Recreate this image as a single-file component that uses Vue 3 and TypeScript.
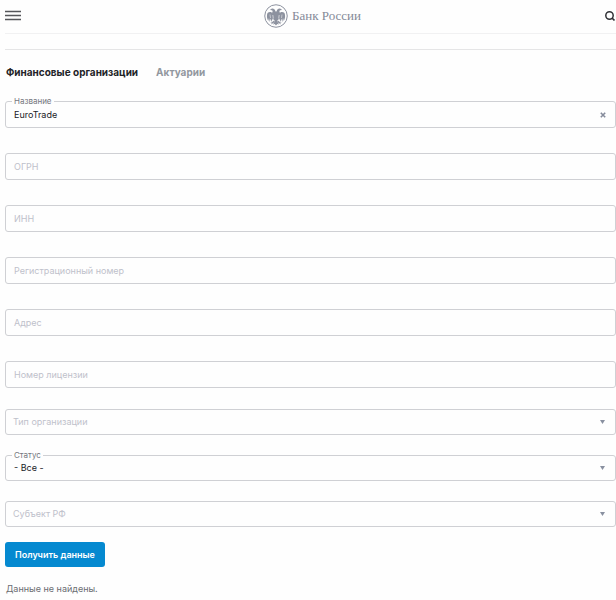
<script setup lang="ts">
import { ref } from 'vue'

interface Field {
  id: string
  label: string
  value: string
}

interface SelectField extends Field {
  options: string[]
}

const tabs = ['Финансовые организации', 'Актуарии']
const activeTab = ref(tabs[0])

const fields = ref<Field[]>([
  { id: 'name', label: 'Название', value: 'EuroTrade' },
  { id: 'ogrn', label: 'ОГРН', value: '' },
  { id: 'inn', label: 'ИНН', value: '' },
  { id: 'reg', label: 'Регистрационный номер', value: '' },
  { id: 'address', label: 'Адрес', value: '' },
  { id: 'license', label: 'Номер лицензии', value: '' },
])

const selects = ref<SelectField[]>([
  { id: 'type', label: 'Тип организации', value: '', options: [] },
  { id: 'status', label: 'Статус', value: '- Все -', options: ['- Все -'] },
  { id: 'region', label: 'Субъект РФ', value: '', options: [] },
])
</script>

<template>
  <div class="page">
    <header class="header">
      <button class="icon-button" type="button" aria-label="Меню">
        <svg width="16" height="12" viewBox="0 0 16 12">
          <path d="M0 1.5h16M0 5.5h16M0 9.5h16" stroke="#55565a" stroke-width="1.3" />
        </svg>
      </button>
      <a class="logo" href="#">
        <svg width="24" height="24" viewBox="0 0 48 48">
          <circle cx="24" cy="24" r="22.5" fill="none" stroke="#8d929f" stroke-width="2" />
          <g fill="#8d929f">
            <path d="M23 15c-1-4-3-6-6-6-2 0-3 1-5 3l3.500.5c1.500.5 2 1.500 1.500 3l-1 3 4 5h8l4-5-1-3c-.5-1.500 0-2.500 1.500-3l3.500-.5c-2-2-3-3-5-3-3 0-5 2-6 6z" />
            <path d="M18 19c-3-4-8-4-11-1-2 5-1.500 11 1.500 16l1.500-6 1.500 8 2-7 1.500 7 2.500-7 2.500 2z" />
            <path d="M30 19c3-4 8-4 11-1 2 5 1.500 11-1.500 16l-1.500-6-1.500 8-2-7-1.500 7-2.500-7-2.500 2z" />
            <path d="M18 20h12l-1 11-3 3 4 7-3.500-1-2.500 3-2.500-3-3.500 1 4-7-3-3z" />
            <path d="M20 33l-5 4h-3l3 1v3l2-2 5-3zM28 33l5 4h3l-3 1v3l-2-2-5-3z" />
          </g>
          <path d="M17.500 22l1 7M30.500 22l-1 7M12 21l1 7M36 21l-1 7" stroke="#fff" stroke-width="1" />
        </svg>
        <span>Банк России</span>
      </a>
      <button class="icon-button" type="button" aria-label="Поиск">
        <svg width="12" height="12" viewBox="0 0 12 12" fill="none" stroke="#303136">
          <circle cx="5.500" cy="5.500" r="3.700" stroke-width="1.500" />
          <path d="M8 8L10.500 10.500" stroke-width="1.700" />
        </svg>
      </button>
    </header>
    <div class="divider"></div>

    <nav class="tabs">
      <button
        v-for="tab in tabs"
        :key="tab"
        type="button"
        class="tab"
        :class="{ active: tab === activeTab }"
        @click="activeTab = tab"
      >{{ tab }}</button>
    </nav>

    <form @submit.prevent>
      <div class="inputs">
        <div v-for="field in fields" :key="field.id" class="field" :class="{ filled: field.value }">
          <input :id="field.id" v-model="field.value" type="text" class="control" />
          <label :for="field.id">{{ field.label }}</label>
          <button
            v-if="field.value"
            type="button"
            class="clear"
            aria-label="Очистить"
            @click="field.value = ''"
          >
            <svg width="6" height="6" viewBox="0 0 6 6">
              <path d="M.8.8l4.400 4.400M5.200.8L.8 5.200" stroke="#858b9b" stroke-width="1.600" />
            </svg>
          </button>
        </div>
      </div>

      <div class="selects">
        <div v-for="field in selects" :key="field.id" class="field" :class="{ filled: field.value }">
          <select :id="field.id" v-model="field.value" class="control">
            <option value=""></option>
            <option v-for="option in field.options" :key="option" :value="option">{{ option }}</option>
          </select>
          <label :for="field.id">{{ field.label }}</label>
          <svg class="arrow" width="5" height="4" viewBox="0 0 5 4">
            <path d="M0 0h5L2.500 4z" fill="#8990a0" />
          </svg>
        </div>
      </div>

      <button class="submit" type="submit">Получить данные</button>
    </form>

    <p class="result">Данные не найдены.</p>
  </div>
</template>

<style>
body {
  margin: 0;
  background: #fefefe;
}
</style>

<style scoped>
.page {
  padding-left: 5px;
  font-family: Inter, 'Noto Sans', sans-serif;
  font-size: 9px;
  color: #202126;
}

button,
input,
select {
  font: inherit;
  color: inherit;
}

button {
  border: 0;
  padding: 0;
  background: none;
  cursor: pointer;
}

svg {
  display: block;
}

.header {
  display: grid;
  grid-template-columns: 1fr auto 1fr;
  align-items: center;
  height: 33px;
  box-sizing: border-box;
  padding-bottom: 2px;
}

.header .icon-button:last-child {
  justify-self: end;
}

.icon-button {
  justify-self: start;
}

.logo {
  display: flex;
  align-items: center;
  gap: 4px;
  padding-left: 4px;
  font-family: 'Liberation Serif', serif;
  font-size: 13px;
  color: #858a98;
  text-decoration: none;
}

.divider {
  height: 15px;
  border-top: 1px solid #f1f1f2;
  border-bottom: 1px solid #e5e5e6;
}

.tabs {
  display: flex;
  gap: 18px;
  padding: 14px 1px 21px;
}

.tab {
  font-size: 10px;
  line-height: 16px;
  font-weight: 700;
  color: #92979f;
}

.tab.active {
  color: #222327;
}

.inputs {
  display: grid;
  gap: 25px;
}

.selects {
  display: grid;
  gap: 20px;
  padding: 21px 0 15px;
}

.field {
  position: relative;
  display: flex;
  align-items: center;
}

.control {
  flex: 1;
  min-width: 0;
  height: 27px;
  box-sizing: border-box;
  margin: 0;
  padding: 0 24px 1px 8px;
  border: 1px solid #cfd0d4;
  border-radius: 3px;
  background: transparent;
  outline: none;
  appearance: none;
}

.selects .control {
  height: 26px;
}

.field label {
  position: absolute;
  left: 9px;
  color: #bfc1cb;
  line-height: 12px;
  pointer-events: none;
}

.selects label {
  left: 8px;
}

.field.filled label {
  top: -5px;
  left: 7px;
  padding: 0 2px;
  background: #fefefe;
  color: #74767d;
  font-size: 8px;
  line-height: 10px;
}

.clear,
.arrow {
  position: absolute;
  right: 10px;
  pointer-events: none;
}

.arrow {
  right: 11px;
}

.clear {
  pointer-events: auto;
}

.submit {
  display: block;
  height: 25px;
  padding: 0 10px;
  border-radius: 3px;
  background: #0589d0;
  color: #fff;
  font-weight: 600;
}

.result {
  margin: 15px 1px 0;
  line-height: 14px;
  color: #6b6d72;
}
</style>
